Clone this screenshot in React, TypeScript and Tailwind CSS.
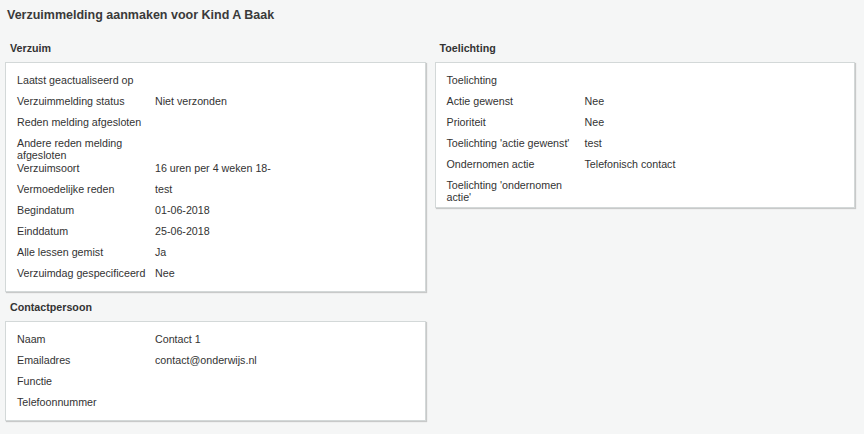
type Row = { label: string; value?: string };

const verzuim: Row[] = [
  { label: "Laatst geactualiseerd op" },
  { label: "Verzuimmelding status", value: "Niet verzonden" },
  { label: "Reden melding afgesloten" },
  { label: "Andere reden melding afgesloten" },
  { label: "Verzuimsoort", value: "16 uren per 4 weken 18-" },
  { label: "Vermoedelijke reden", value: "test" },
  { label: "Begindatum", value: "01-06-2018" },
  { label: "Einddatum", value: "25-06-2018" },
  { label: "Alle lessen gemist", value: "Ja" },
  { label: "Verzuimdag gespecificeerd", value: "Nee" },
];

const contact: Row[] = [
  { label: "Naam", value: "Contact 1" },
  { label: "Emailadres", value: "contact@onderwijs.nl" },
  { label: "Functie" },
  { label: "Telefoonnummer" },
];

const toelichting: Row[] = [
  { label: "Toelichting" },
  { label: "Actie gewenst", value: "Nee" },
  { label: "Prioriteit", value: "Nee" },
  { label: "Toelichting 'actie gewenst'", value: "test" },
  { label: "Ondernomen actie", value: "Telefonisch contact" },
  { label: "Toelichting 'ondernomen actie'" },
];

function Section({ title, rows }: { title: string; rows: Row[] }) {
  return (
    <div>
      <div className="h-[28px] flex items-center pl-[5px] text-[10.7px] font-bold text-[#333]">{title}</div>
      <div className="bg-white border border-[#d3d8d8] shadow-[1px_1px_1px_rgba(0,0,0,0.18)] pt-[6px] pb-[8px] px-[11px]">
        {rows.map((r) => (
          <div key={r.label} className="flex items-start min-h-[21px] pt-[4.5px] leading-[12px]">
            <div className="w-[138px] shrink-0 pr-2 -mb-[3.5px]">{r.label}</div>
            <div>{r.value}</div>
          </div>
        ))}
      </div>
    </div>
  );
}

export default function App() {
  return (
    <div
      className="min-h-[434px] bg-[#f5f6f6] text-[#333] text-[10.7px] pl-[5px] pr-[9px]"
      style={{ fontFamily: '"Liberation Sans", Arial, sans-serif' }}
    >
      <div className="h-[30px] flex items-center pl-[2px] text-[12.5px] font-bold text-[#3a3a3a]">
        Verzuimmelding aanmaken voor Kind A Baak
      </div>
      <div className="mt-[4px] grid grid-cols-2 gap-[9px]">
        <div className="flex flex-col gap-[1px]">
          <Section title="Verzuim" rows={verzuim} />
          <Section title="Contactpersoon" rows={contact} />
        </div>
        <div>
          <Section title="Toelichting" rows={toelichting} />
        </div>
      </div>
    </div>
  );
}
